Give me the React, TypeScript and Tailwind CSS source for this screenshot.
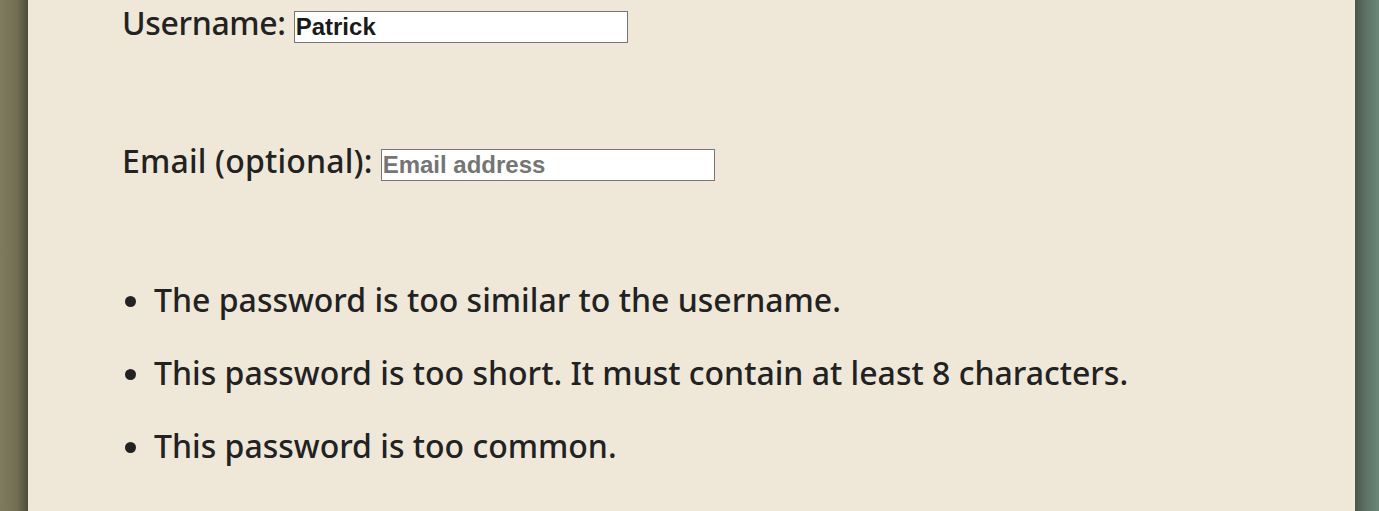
export default function App() {
  return (
    <div className="flex h-[511px] w-full overflow-hidden bg-[linear-gradient(to_right,#7d7a5d,#4a5347_50%,#6b8777)]">
      <div className="w-[28px] shrink-0 bg-[linear-gradient(to_right,#7e7b5e,#736f53_60%,#4e4c39)]" />
      <main className="flex-1 bg-[#efe8d9] pl-[94px] text-[#222222] font-['Noto_Sans',sans-serif] font-medium text-[32px]">
        <div className="flex items-baseline h-[44px] -mt-[1px]">
          <label htmlFor="username" className="mr-[8px] tracking-[-0.35px]">Username:</label>
          <input
            id="username"
            defaultValue="Patrick"
            className="w-[334px] h-[32px] border border-[#767676] bg-white px-[1px] py-[1px] font-['Liberation_Sans',Arial,sans-serif] font-bold text-[24px] text-[#1a1a1a] outline-none"
          />
        </div>
        <div className="flex items-baseline h-[44px] mt-[94px]">
          <label htmlFor="email" className="mr-[8px] tracking-[0.18px]">Email (optional):</label>
          <input
            id="email"
            placeholder="Email address"
            className="w-[334px] h-[32px] border border-[#767676] bg-white px-[1px] py-[1px] font-['Liberation_Sans',Arial,sans-serif] font-bold text-[24px] text-[#1a1a1a] placeholder:text-[#757575] outline-none"
          />
        </div>
        <ul className="list-disc pl-[32px] mt-[97px] space-y-[29px] leading-[44px]">
          <li>The password is too similar to the username.</li>
          <li>This password is too short. It must contain at least 8 characters.</li>
          <li>This password is too common.</li>
        </ul>
      </main>
      <div className="w-[24px] shrink-0 bg-[linear-gradient(to_right,#4a5548,#5f7566_50%,#6b8777)]" />
    </div>
  );
}
